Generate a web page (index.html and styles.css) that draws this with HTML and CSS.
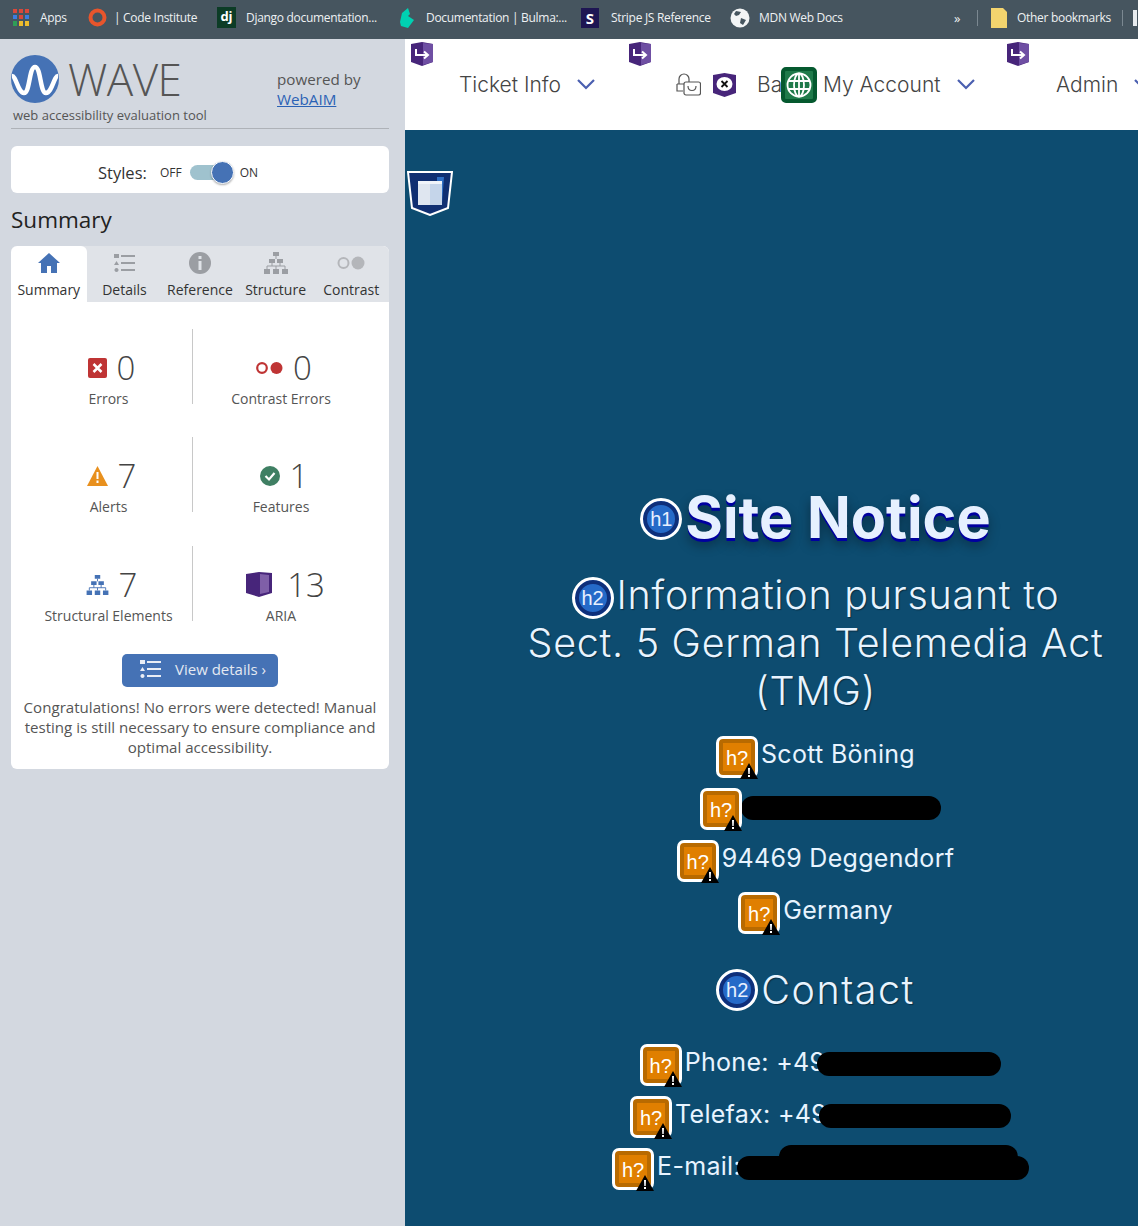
FILE: index.html
```html
<!DOCTYPE html>
<html>
<head>
<meta charset="UTF-8">
<title>Site Notice</title>
<link rel="stylesheet" href="styles.css">
</head>

<body>
<svg class="defs">
	<symbol id="go" viewBox="0 0 22 24">
		<path d="M0 2L11 0L22 2V20L11 24L0 20Z" fill="#47257a"/>
		<path d="M12 1L22 2V20L12 23Z" fill="#6f4fa3"/>
		<path d="M5 7V13H16M13 9.500L17 13L13 16.500" fill="none" stroke="#fff" stroke-width="2"/>
	</symbol>
	<symbol id="warn" viewBox="0 0 18 16">
		<path d="M9 0L18 16H0Z" fill="#000"/>
		<path d="M8 5H10L9.700 11H8.300ZM8 12H10V14H8Z" fill="#fff"/>
	</symbol>
	<symbol id="tree" viewBox="0 0 24 22">
		<path d="M9 0H15V4H9ZM5 7H11V11H5ZM13 7H19V11H13ZM0 17H6V22H0ZM9 17H15V22H9ZM18 17H24V22H18Z"/>
		<path d="M12 4V7M8 11V14M16 11V14M3 17V14H21V17M12 14V17" fill="none" stroke="currentColor" stroke-width="1"/>
	</symbol>
	<symbol id="list" viewBox="0 0 21 18">
		<path d="M0 0H5V4H0ZM2.500 7L5 11H0ZM2.500 14A2 2 0 1 1 2.490 14Z"/>
		<path d="M7 1H21V3H7ZM7 8H21V10H7ZM7 15H21V17H7Z"/>
	</symbol>
</svg>

<div class="bookmarks">
	<a class="mark mark-apps"><svg width="17" height="18" viewBox="0 0 17 18"><path d="M0 0h4v4H0z" fill="#d9483b"/><path d="M6 0h4v4H6zM12 0h4v4h-4z" fill="#d9483b"/><path d="M0 6h4v4H0z" fill="#3b7de0"/><path d="M6 6h4v4H6z" fill="#d9483b"/><path d="M12 6h4v4h-4z" fill="#3b7de0"/><path d="M0 12h4v5H0z" fill="#2f9e57"/><path d="M6 12h4v5H6zM12 12h4v5h-4z" fill="#eebc2c"/></svg>Apps</a>
	<a class="mark mark-ci"><svg width="19" height="19" viewBox="0 0 19 19"><circle cx="9.500" cy="9.500" r="7" fill="none" stroke="#e8552c" stroke-width="4"/></svg>| Code Institute</a>
	<a class="mark mark-dj"><span class="dj">dj</span>Django documentation...</a>
	<a class="mark mark-bulma"><svg width="14" height="20" viewBox="0 0 14 20"><path d="M0 14L2 5L8 0L10 6L8 8L14 12L8 20L1 18Z" fill="#00d1b2"/></svg>Documentation | Bulma:...</a>
	<a class="mark mark-stripe"><span class="stripe">S</span>Stripe JS Reference</a>
	<a class="mark mark-mdn"><svg width="20" height="20" viewBox="0 0 20 20"><circle cx="10" cy="10" r="9.500" fill="#f2f4f5"/><path d="M6 3L11 4L9 7L6 8L4 6ZM11 10L16 12L13 17L10 15Z" fill="#46555f"/></svg>MDN Web Docs</a>
	<span class="more">»</span>
	<span class="bar-line"></span>
	<a class="mark mark-other"><svg width="16" height="20" viewBox="0 0 16 20"><path d="M0 0H12L16 4V20H0Z" fill="#f3d46e"/></svg>Other bookmarks</a>
	<span class="bar-line"></span>
	<span class="stub"></span>
</div>

<div class="page">
	<div class="panel">
		<div class="brand">
			<div class="brand-main">
				<svg width="48" height="48" viewBox="0 0 48 48"><circle cx="24" cy="24" r="24" fill="#4572b5"/><path d="M1 21C5 21 7 38 13 38C19 38 18 12 24 12C30 12 29 38 35 38C41 38 43 21 47 21" fill="none" stroke="#fff" stroke-width="4.500"/></svg>
				<span class="wave">WAVE</span>
				<div class="powered">powered by<br><a class="webaim">WebAIM</a></div>
			</div>
			<div class="tagline">web accessibility evaluation tool</div>
		</div>

		<div class="styles-card">
			<span class="styles-label">Styles:</span>
			<span class="styles-off">OFF</span>
			<span class="toggle"><span class="knob"></span></span>
			<span class="styles-on">ON</span>
		</div>

		<h2 class="summary-title">Summary</h2>

		<div class="card">
			<div class="tabs">
				<div class="tab tab-on">
					<svg width="22" height="20" viewBox="0 0 22 20"><path d="M11 0L22 10H19V20H13V13H9V20H3V10H0Z" fill="#4572b5"/></svg>
					<span>Summary</span>
				</div>
				<div class="tab">
					<svg width="21" height="18"><use href="#list"/></svg>
					<span>Details</span>
				</div>
				<div class="tab">
					<svg width="22" height="22" viewBox="0 0 22 22"><circle cx="11" cy="11" r="11" fill="#9b9ea3"/><path d="M9.500 4H12.500V7H9.500ZM9.500 9H12.500V18H9.500Z" fill="#e0e3e8"/></svg>
					<span>Reference</span>
				</div>
				<div class="tab">
					<svg width="24" height="22"><use href="#tree"/></svg>
					<span>Structure</span>
				</div>
				<div class="tab">
					<svg width="28" height="13" viewBox="0 0 28 13"><circle cx="6.500" cy="6.500" r="5" fill="none" stroke="#b4b6ba" stroke-width="2"/><circle cx="21" cy="6.500" r="6.500" fill="#b4b6ba"/></svg>
					<span>Contrast</span>
				</div>
			</div>

			<div class="stats">
				<div class="stat stat-left">
					<div class="stat-num"><svg width="19" height="20" viewBox="0 0 19 20"><rect width="19" height="20" rx="2" fill="#bf3434"/><path d="M5.500 6L13.500 14M13.500 6L5.500 14" stroke="#fff" stroke-width="2.500"/></svg>0</div>
					<div class="stat-name">Errors</div>
				</div>
				<div class="stat">
					<div class="stat-num"><svg width="27" height="12" viewBox="0 0 27 12"><circle cx="6" cy="6" r="4.800" fill="none" stroke="#bf3434" stroke-width="2.200"/><circle cx="20.500" cy="6" r="6" fill="#bf3434"/></svg>0</div>
					<div class="stat-name">Contrast Errors</div>
				</div>
				<div class="stat stat-left">
					<div class="stat-num"><svg width="21" height="20" viewBox="0 0 21 20"><path d="M10.500 0L21 20H0Z" fill="#e8901e"/><path d="M9.500 6H11.500V13H9.500ZM9.500 14.500H11.500V17H9.500Z" fill="#fff"/></svg>7</div>
					<div class="stat-name">Alerts</div>
				</div>
				<div class="stat">
					<div class="stat-num"><svg width="20" height="20" viewBox="0 0 20 20"><circle cx="10" cy="10" r="10" fill="#3f7f63"/><path d="M5.500 10L9 13.500L14.500 7" fill="none" stroke="#fff" stroke-width="2.200"/></svg>1</div>
					<div class="stat-name">Features</div>
				</div>
				<div class="stat stat-left">
					<div class="stat-num"><svg class="tree-blue" width="23" height="20"><use href="#tree"/></svg>7</div>
					<div class="stat-name">Structural Elements</div>
				</div>
				<div class="stat">
					<div class="stat-num stat-aria"><svg width="26" height="25" viewBox="0 0 26 25"><path d="M0 2L13 0L26 1V21L13 25L0 21Z" fill="#47257a"/><path d="M14 2L23 3V20L14 22Z" fill="#7f5fa8"/></svg>13</div>
					<div class="stat-name">ARIA</div>
				</div>
			</div>

			<a class="details-btn"><svg width="21" height="18"><use href="#list"/></svg>View details ›</a>
			<p class="congrats">Congratulations! No errors were detected! Manual testing is still necessary to ensure compliance and optimal accessibility.</p>
		</div>
	</div>

	<div class="content">
		<nav class="nav">
			<div class="nav-item nav-first">
				<svg class="go-icon" width="22" height="24"><use href="#go"/></svg>
				<span>Ticket Info</span>
				<svg class="chev" width="18" height="11" viewBox="0 0 18 11"><path d="M1 1L9 9L17 1" fill="none" stroke="#4a5fb0" stroke-width="2.200"/></svg>
			</div>
			<div class="nav-item nav-second">
				<svg class="go-icon" width="22" height="24"><use href="#go"/></svg>
				<svg class="bag" width="25" height="24" viewBox="0 0 25 24"><path d="M3 11V6A5 5 0 0 1 13 6V9M1 11V18H7M1 11H9" fill="none" stroke="#555" stroke-width="1.200"/><rect x="8" y="9" width="16.500" height="13" rx="2" fill="#fff" stroke="#555" stroke-width="1.200"/><path d="M12 13C12 19 20 19 20 13" fill="none" stroke="#555" stroke-width="1.200"/></svg>
				<svg class="x-icon" width="23" height="24" viewBox="0 0 23 24"><path d="M0 2L11.500 0L23 2V20L11.500 24L0 20Z" fill="#47257a"/><ellipse cx="11.500" cy="11" rx="8" ry="7" fill="#fff"/><path d="M8.500 8L14.500 14M14.500 8L8.500 14" stroke="#111" stroke-width="1.800"/></svg>
				<span class="ba">Ba</span>
				<span class="globe"><svg width="26" height="26" viewBox="0 0 26 26"><g fill="none" stroke="#fff" stroke-width="1.800"><circle cx="13" cy="13" r="11.500"/><ellipse cx="13" cy="13" rx="5" ry="11.500"/><path d="M13 1.500V24.500M2.500 9H23.500M2.500 17H23.500"/></g></svg></span>
				<span>My Account</span>
				<svg class="chev" width="18" height="11" viewBox="0 0 18 11"><path d="M1 1L9 9L17 1" fill="none" stroke="#4a5fb0" stroke-width="2.200"/></svg>
			</div>
			<div class="nav-item nav-third">
				<svg class="go-icon" width="22" height="24"><use href="#go"/></svg>
				<span>Admin</span>
				<svg class="chev" width="18" height="11" viewBox="0 0 18 11"><path d="M1 1L9 9L17 1" fill="none" stroke="#4a5fb0" stroke-width="2.200"/></svg>
			</div>
		</nav>

		<main class="main">
			<svg class="shield" width="46" height="46" viewBox="0 0 46 46"><path d="M1 2H45L41 38L23 45L5 38Z" fill="#102f72" stroke="#fff" stroke-width="2"/><path d="M30 7H37L35 33L30 35Z" fill="#2f6fc4"/><rect x="11" y="11" width="24" height="3" fill="#f0f4fa"/><rect x="11" y="14" width="24" height="21" fill="#c5d5ea"/><rect x="11" y="14" width="12" height="21" fill="#dfe6f0"/></svg>

			<h1 class="title"><span class="ring">h1</span>Site Notice</h1>
			<h2 class="sub"><span class="ring">h2</span>Information pursuant to<br>Sect. 5 German Telemedia Act<br>(TMG)</h2>

			<div class="rows rows-address">
				<div class="row"><span class="hq">h?<svg width="18" height="16"><use href="#warn"/></svg></span><span class="row-text">Scott Böning</span></div>
				<div class="row row-hidden"><span class="hq">h?<svg width="18" height="16"><use href="#warn"/></svg></span><span class="pill pill-street"></span></div>
				<div class="row"><span class="hq">h?<svg width="18" height="16"><use href="#warn"/></svg></span><span class="row-text">94469 Deggendorf</span></div>
				<div class="row"><span class="hq">h?<svg width="18" height="16"><use href="#warn"/></svg></span><span class="row-text">Germany</span></div>
			</div>

			<h2 class="sub sub-contact"><span class="ring">h2</span>Contact</h2>

			<div class="rows">
				<div class="row row-hidden"><span class="hq">h?<svg width="18" height="16"><use href="#warn"/></svg></span><span class="row-text">Phone: +49</span><span class="pill pill-phone"></span></div>
				<div class="row row-hidden"><span class="hq">h?<svg width="18" height="16"><use href="#warn"/></svg></span><span class="row-text">Telefax: +49</span><span class="pill pill-fax"></span></div>
				<div class="row row-hidden"><span class="hq">h?<svg width="18" height="16"><use href="#warn"/></svg></span><span class="row-text">E-mail:</span><span class="pill pill-mail"><span class="pill pill-mail-top"></span></span></div>
			</div>
		</main>
	</div>
</div>
</body>
</html>
```

FILE: styles.css
```css
*{ margin:0; padding:0; box-sizing:border-box;}
html,body{ height:1226px; overflow:hidden;}
body{ font-family:"Open Sans",sans-serif; background:#0d4c70;}
.defs{ position:absolute; width:0; height:0;}

/* bookmarks bar */
.bookmarks{ height:39px; background:#46555f; display:flex; align-items:center; padding:0 0 4px 13px; color:#eef1f3; font-size:12px; letter-spacing:-0.3px;}
.mark{ display:flex; align-items:center; white-space:nowrap;}
.mark-apps{ gap:10px; width:75px;}
.mark-ci{ gap:7px; width:129px;}
.mark-dj{ gap:10px; width:183px;}
.mark-bulma{ gap:12px; width:181px;}
.mark-stripe{ gap:12px; width:149px;}
.mark-mdn{ gap:9px; width:224px;}
.mark-other{ gap:10px; width:131px; margin-left:13px;}
.dj{ width:19px; height:21px; background:#0c3c26; color:#fff; font-weight:700; font-size:13px; text-align:center; line-height:19px; letter-spacing:0;}
.stripe{ width:18px; height:20px; background:#1e1653; color:#fff; font-weight:700; font-size:15px; text-align:center; line-height:20px; letter-spacing:0;}
.more{ width:23px; font-size:13px;}
.bar-line{ width:1px; height:16px; background:#7b8891;}
.stub{ width:4px; height:16px; margin-left:10px; background:#e8ecef;}

.page{ display:flex; height:1187px;}

/* wave panel */
.panel{ width:405px; flex-shrink:0; background:#d3d8e0; padding:16px 16px 0 11px;}
.brand{ height:74px; border-bottom:1px solid #aeb2b8;}
.brand-main{ display:flex; align-items:flex-start; height:48px;}
.wave{ font-size:44px; font-weight:300; color:#555; line-height:46px; margin:1px 0 0 9px; width:209px; letter-spacing:-0.5px;}
.powered{ font-size:15.200px; line-height:19.500px; color:#555; padding-top:15px; height:48px; overflow:visible;}
.webaim{ color:#2b62b5; text-decoration:underline;}
.tagline{ font-size:13px; color:#555; line-height:17px; padding-left:2px; margin-top:4px;}
.styles-card{ margin-top:17px; height:47px; background:#fff; border-radius:6px; display:flex; align-items:center; padding:6px 0 0 87px; color:#333;}
.styles-label{ font-size:16.500px; width:62px;}
.styles-off,.styles-on{ font-size:12px;}
.toggle{ width:40px; height:15px; border-radius:8px; background:#9fc2ce; margin:0 10px 0 8px; position:relative; display:block;}
.knob{ position:absolute; right:-4px; top:-4px; width:23px; height:23px; border-radius:50%; background:#4572b5; border:1px solid #fff; box-shadow:0 1px 2px rgba(0,0,0,0.3);}
.summary-title{ font-size:22.500px; font-weight:400; color:#222; line-height:32px; margin:11px 0 10px;}

.card{ background:#fff; border-radius:6px; height:523px; overflow:hidden;}
.tabs{ display:flex; height:56px; background:#e0e3e8;}
.tab{ width:75.600px; display:flex; flex-direction:column; align-items:center; font-size:14px; color:#333; padding-top:6px; white-space:nowrap;}
.tab svg{ height:22px; margin-bottom:5px; color:#9b9ea3; fill:#9b9ea3;}
.tab span{ line-height:22px;}
.tab-on{ background:#fff; border-radius:6px 6px 0 0;}

.stats{ display:grid; grid-template-columns:168px 176px; grid-auto-rows:75px; row-gap:33.400px; padding:27px 0 0 14px;}
.stat{ display:flex; flex-direction:column; align-items:center; padding-top:20px;}
.stat-left{ border-right:1px solid #c8c8c8;}
.stat-num{ display:flex; align-items:center; gap:10px; font-size:33px; font-weight:300; color:#444; line-height:38px; height:38px; margin-left:6px;}
.stat-aria{ gap:15px; margin-left:9px;}
.stat-name{ font-size:14px; color:#555; line-height:22px; margin-top:1px; white-space:nowrap;}
.tree-blue{ color:#4572b5; fill:#4572b5;}

.details-btn{ display:flex; align-items:center; gap:14px; width:156px; height:33px; margin:33px auto 0; background:#4572b5; border-radius:5px; color:#e4e9f2; font-size:15px; padding:0 0 3px 18px; fill:#e9edf5;}
.congrats{ font-size:15.100px; line-height:20px; color:#555; text-align:center; margin-top:10px; padding:0 5px;}

/* right side */
.content{ flex:1; min-width:0; position:relative; overflow:hidden;}
.nav{ height:91px; background:#fff; display:flex; color:#444; font-family:Inter,sans-serif; font-size:21px;}
.nav-item{ position:relative; display:flex; flex-shrink:0; align-items:center; height:91px; padding:0 0 0 54px; white-space:nowrap; font-weight:300;}
.nav-first{ width:218px;}
.nav-second{ width:378px; padding-left:53px;}
.nav-third{ padding-left:55px;}
.go-icon{ position:absolute; left:6px; top:3px;}
.chev{ margin-left:16px; flex-shrink:0;}
.x-icon{ margin-left:12px;}
.ba{ margin-left:21px; width:24px; overflow:hidden;}
.globe{ width:36px; height:36px; background:#1f7a4a; border:4px solid #05592f; border-radius:5px; margin-right:6px; display:flex; align-items:center; justify-content:center;}

.main{ height:1096px; padding:359px 0 0 88px; color:#e8f4ff; font-family:Inter,sans-serif; position:relative;}
.shield{ position:absolute; left:2px; top:40px;}
.title{ display:flex; align-items:center; justify-content:center; height:56px; font-size:57.500px; font-weight:700; color:#e6f0ff; text-shadow:0 3px 0 #0000a0,0 6px 12px rgba(0,0,0,0.4); white-space:nowrap;}
.title .ring{ margin-top:4px;}
.sub{ margin-top:26px; font-size:39.500px; font-weight:300; line-height:48px; text-align:center; white-space:nowrap; letter-spacing:0.700px; text-shadow:1px 1px 1px rgba(0,0,0,0.4);}
.sub .ring{ margin:-10px 3px -10px 0; vertical-align:4px;}
.sub-contact{ margin-top:37px; height:41px; line-height:38px; letter-spacing:1.500px;}
.sub-contact .ring{ vertical-align:7px;}
.ring{ display:inline-flex; align-items:center; justify-content:center; width:42px; height:42px; flex-shrink:0; margin-right:3px; border-radius:50%; background:#256ac8; border:3px solid #fff; box-shadow:inset 0 0 0 4px #0e2f7a; font-family:"Liberation Sans",sans-serif; font-size:20px; font-weight:400; letter-spacing:0; color:#e8f0ff; text-shadow:none;}

.rows{ margin-top:32px; display:flex; flex-direction:column; gap:10px;}
.rows-address{ margin-top:21px;}
.row{ display:flex; align-items:center; justify-content:center; height:42px; font-size:25px; font-weight:400; letter-spacing:0.300px;}
.row-hidden{ padding-left:10px;}
.row-text{ margin:-6px 0 0 3px; white-space:nowrap;}
.hq{ position:relative; width:42px; height:42px; flex-shrink:0; display:flex; align-items:center; justify-content:center; background:#e07f00; border:3px solid #fff; border-radius:7px; box-shadow:inset 0 0 0 4px #b86a00; font-family:"Liberation Sans",sans-serif; font-size:20px; font-weight:400; letter-spacing:0; color:#fff; padding-top:3px;}
.hq svg{ position:absolute; right:-3px; bottom:-4px;}
.pill{ display:block; background:#000; border-radius:12px; height:24px; margin-top:-2px;}
.pill-street{ width:200px; margin-left:-1px;}
.pill-phone{ width:184px; margin-left:-8px;}
.pill-fax{ width:192px; margin-left:-8px;}
.pill-mail{ width:292px; margin-left:-4px; position:relative;}
.pill-mail-top{ position:absolute; left:42px; top:-11px; width:239px; margin:0;}
```
